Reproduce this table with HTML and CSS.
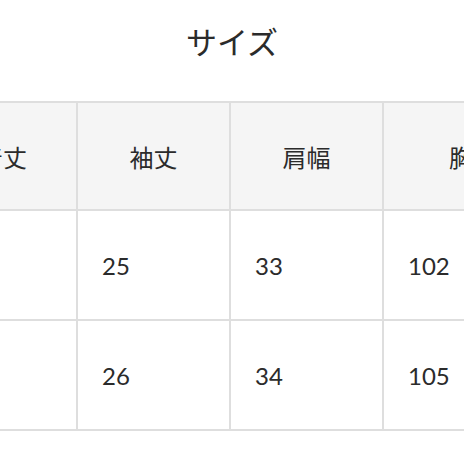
FILE: index.html
```html
<!DOCTYPE html>
<html lang="ja">
<head>
<meta charset="utf-8">
<link rel="stylesheet" href="styles.css">
</head>
<body>
<div class="page">
  <h2 class="title">サイズ</h2>
  <div class="scroller">
    <table class="size-table">
      <colgroup>
        <col class="c1">
        <col class="c2">
        <col class="c3">
        <col class="c4">
      </colgroup>
      <thead>
        <tr>
          <th>着丈</th>
          <th>袖丈</th>
          <th>肩幅</th>
          <th>胸囲</th>
        </tr>
      </thead>
      <tbody>
        <tr>
          <td>70</td>
          <td>25</td>
          <td>33</td>
          <td>102</td>
        </tr>
        <tr>
          <td>72</td>
          <td>26</td>
          <td>34</td>
          <td>105</td>
        </tr>
      </tbody>
    </table>
  </div>
</div>
</body>
</html>
```

FILE: styles.css
```css
html, body {
  margin: 0;
  padding: 0;
  background: #ffffff;
}

.page {
  width: 464px;
  height: 464px;
  overflow: hidden;
}

.title {
  margin: 0;
  height: 101px;
  box-sizing: border-box;
  padding-top: 21px;
  text-align: center;
  font-family: "Noto Sans CJK JP", "Noto Sans", sans-serif;
  font-weight: 400;
  font-size: 31px;
  line-height: 40px;
  color: #2b2b2b;
}

.scroller {
  overflow: hidden;
  width: 464px;
}

.size-table {
  border-collapse: collapse;
  margin-left: -72px;
  table-layout: fixed;
  width: 634px;
  min-width: 634px;
}

.size-table th,
.size-table td {
  border: 2px solid #dedede;
  padding: 0;
  color: #2b2b2b;
}

.size-table th {
  background: #f5f5f5;
  height: 106px;
  text-align: center;
  font-family: "Noto Sans CJK JP", "Noto Sans", sans-serif;
  font-weight: 400;
  font-size: 24px;
}

.size-table td {
  background: #ffffff;
  height: 108px;
  text-align: left;
  padding-left: 24px;
  font-family: Lato, "Liberation Sans", sans-serif;
  font-size: 24px;
}

.c1 { width: 148px; }
.c2 { width: 153px; }
.c3 { width: 153px; }
.c4 { width: 180px; }
```
